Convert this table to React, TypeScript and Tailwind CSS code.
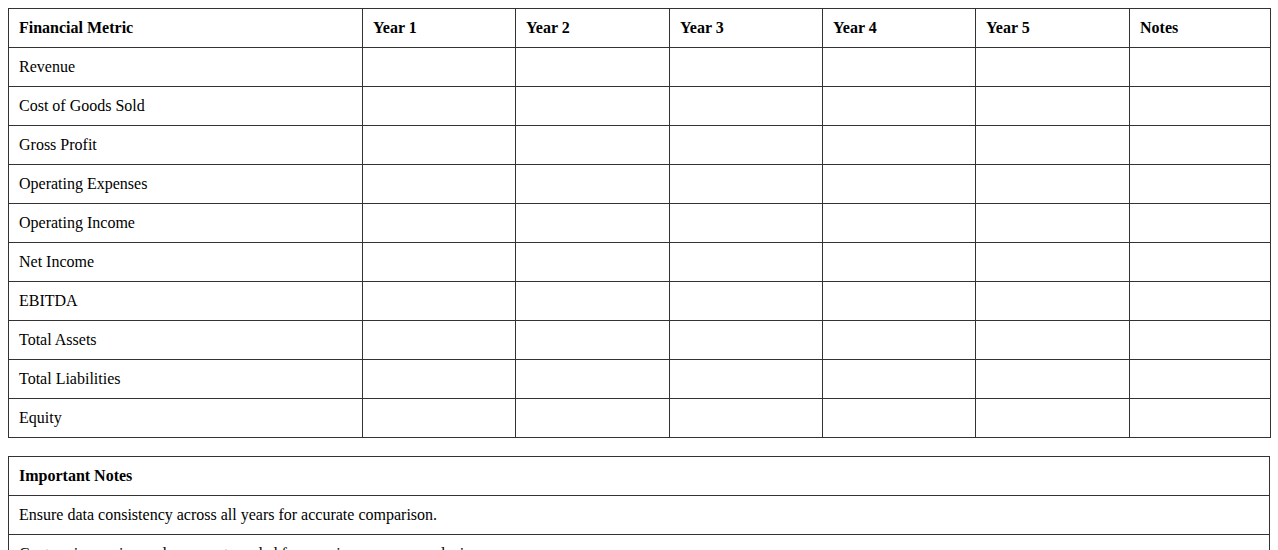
import React from "react";

const metrics = [
  "Revenue",
  "Cost of Goods Sold",
  "Gross Profit",
  "Operating Expenses",
  "Operating Income",
  "Net Income",
  "EBITDA",
  "Total Assets",
  "Total Liabilities",
  "Equity",
];

const cols = ["Year 1", "Year 2", "Year 3", "Year 4", "Year 5", "Notes"];
const widths = ["w-[354px]", "w-[153px]", "w-[154px]", "w-[153px]", "w-[153px]", "w-[154px]", "w-[141px]"];

const cell = "border border-[#333] px-[10px] py-[10px] text-left leading-[18px]";

export default function App() {
  return (
    <div className="p-2 bg-white text-black text-[16px]" style={{ fontFamily: '"Liberation Serif", "Times New Roman", serif' }}>
      <table className="w-full border-collapse table-fixed">
        <colgroup>
          {widths.map((w, i) => (
            <col key={i} className={w} />
          ))}
        </colgroup>
        <thead>
          <tr>
            <th className={`${cell} font-bold`}>Financial Metric</th>
            {cols.map((c) => (
              <th key={c} className={`${cell} font-bold`}>{c}</th>
            ))}
          </tr>
        </thead>
        <tbody>
          {metrics.map((m) => (
            <tr key={m}>
              <td className={cell}>{m}</td>
              {cols.map((c) => (
                <td key={c} className={cell}></td>
              ))}
            </tr>
          ))}
        </tbody>
      </table>
      <table className="w-full border-collapse mt-[18px]">
        <thead>
          <tr>
            <th className={`${cell} font-bold`}>Important Notes</th>
          </tr>
        </thead>
        <tbody>
          <tr>
            <td className={cell}>Ensure data consistency across all years for accurate comparison.</td>
          </tr>
          <tr>
            <td className={cell}>Capture increasing and recurrent needed for ongoing resource analysis.</td>
          </tr>
        </tbody>
      </table>
    </div>
  );
}
